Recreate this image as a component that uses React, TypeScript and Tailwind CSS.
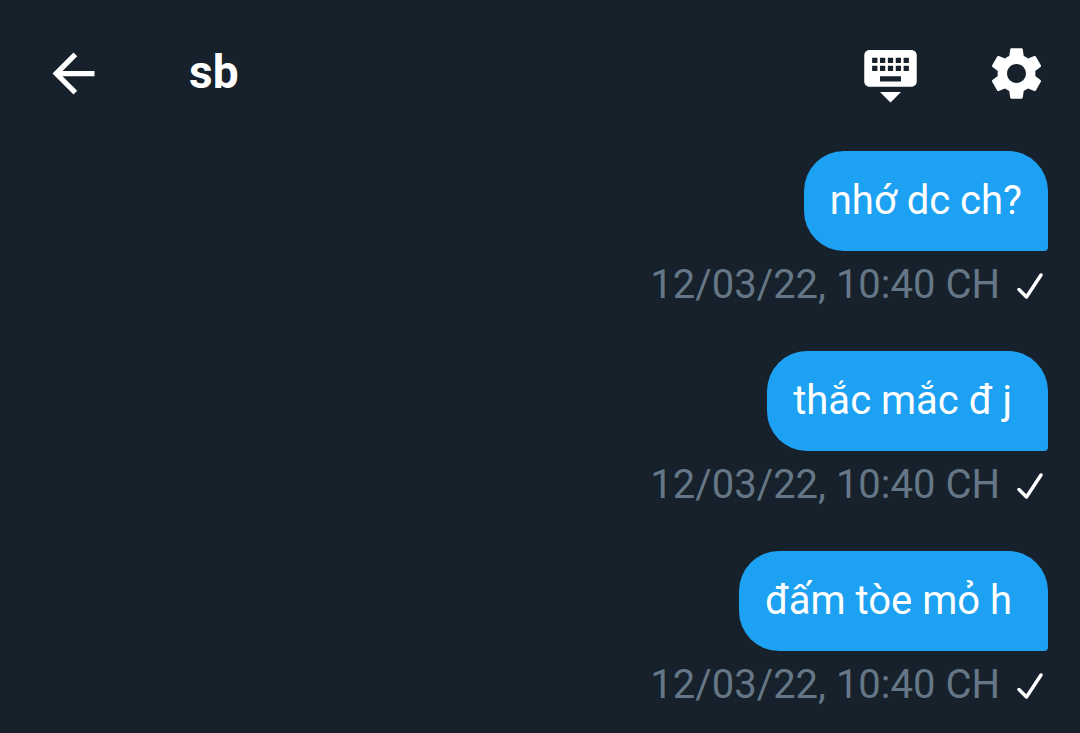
import React from 'react';

interface Message {
  id: number;
  text: string;
  sentAt: string;
}

// Texts are kept as typed, trailing spaces included
const messages: Message[] = [
  { id: 1, text: 'nhớ dc ch?', sentAt: '12/03/22, 10:40 CH' },
  { id: 2, text: 'thắc mắc đ j ', sentAt: '12/03/22, 10:40 CH' },
  { id: 3, text: 'đấm tòe mỏ h ', sentAt: '12/03/22, 10:40 CH' },
];

const HeaderIcon: React.FC<{ d: string }> = ({ d }) => (
  <svg viewBox="0 0 24 24" className="size-[63px] fill-current" aria-hidden="true">
    <path d={d} />
  </svg>
);

const BACK = 'M20 11H7.83l5.59-5.59L12 4l-8 8 8 8 1.41-1.41L7.83 13H20v-2z';
const KEYBOARD_HIDE =
  'M20 3H4c-1.1 0-1.99.9-1.99 2L2 15c0 1.1.9 2 2 2h16c1.1 0 2-.9 2-2V5c0-1.1-.9-2-2-2zm-9 3h2v2h-2V6zm0 3h2v2h-2V9zM8 6h2v2H8V6zm0 3h2v2H8V9zm-1 2H5V9h2v2zm0-3H5V6h2v2zm9 7H8v-2h8v2zm0-4h-2V9h2v2zm0-3h-2V6h2v2zm3 3h-2V9h2v2zm0-3h-2V6h2v2zm-7 15l4-4H8l4 4z';
const SETTINGS =
  'M19.14 12.94c.04-.3.06-.61.06-.94 0-.32-.02-.64-.07-.94l2.03-1.58c.18-.14.23-.41.12-.61l-1.92-3.32c-.12-.22-.37-.29-.59-.22l-2.39.96c-.5-.38-1.03-.7-1.62-.94l-.36-2.54c-.04-.24-.24-.41-.48-.41h-3.84c-.24 0-.43.17-.47.41l-.36 2.54c-.59.24-1.13.57-1.62.94l-2.39-.96c-.22-.08-.47 0-.59.22L2.74 8.87c-.12.21-.08.47.12.61l2.03 1.58c-.05.3-.09.63-.09.94s.02.64.07.94l-2.03 1.58c-.18.14-.23.41-.12.61l1.92 3.32c.12.22.37.29.59.22l2.39-.96c.5.38 1.03.7 1.62.94l.36 2.54c.05.24.24.41.48.41h3.84c.24 0 .44-.17.47-.41l.36-2.54c.59-.24 1.13-.56 1.62-.94l2.39.96c.22.08.47 0 .59-.22l1.92-3.32c.12-.22.07-.47-.12-.61l-2.01-1.58zM12 15.6c-1.98 0-3.6-1.62-3.6-3.6s1.62-3.6 3.6-3.6 3.6 1.62 3.6 3.6-1.62 3.6-3.6 3.6z';

const Header: React.FC = () => (
  <header className="flex items-center pt-[42px] pr-8 pb-[46px] pl-[42px]">
    <button type="button" aria-label="Quay lại">
      <HeaderIcon d={BACK} />
    </button>
    <h1 className="ml-[84px] flex-1 pb-1 text-[46px] leading-[54px] font-bold">sb</h1>
    <div className="flex gap-[63px]">
      <button type="button" aria-label="Ẩn bàn phím">
        <HeaderIcon d={KEYBOARD_HIDE} />
      </button>
      <button type="button" aria-label="Cài đặt">
        <HeaderIcon d={SETTINGS} />
      </button>
    </div>
  </header>
);

const MessageItem: React.FC<{ message: Message }> = ({ message }) => (
  <li className="flex flex-col items-end gap-[10px]">
    <p className="rounded-[40px] rounded-br-[4px] bg-[#1da1f2] p-[26px] text-[40px] leading-[48px] whitespace-pre-wrap">
      {message.text}
    </p>
    <div className="flex items-center gap-4 pr-1 text-[40px] leading-[48px] text-[#657786]">
      <time>{message.sentAt}</time>
      <svg
        viewBox="0 0 28 28"
        className="size-7 fill-none stroke-white"
        strokeWidth="3.4"
        strokeLinecap="round"
        strokeLinejoin="round"
        role="img"
        aria-label="Đã gửi"
      >
        <path d="M3 18.5 10.5 26 25 4" />
      </svg>
    </div>
  </li>
);

export default function App() {
  return (
    <div className="min-h-screen bg-[#17212b] font-[Roboto,sans-serif] text-white">
      <Header />
      <main>
        <ul className="flex flex-col gap-[42px] pr-8 pl-8">
          {messages.map((message) => (
            <MessageItem key={message.id} message={message} />
          ))}
        </ul>
      </main>
    </div>
  );
}
